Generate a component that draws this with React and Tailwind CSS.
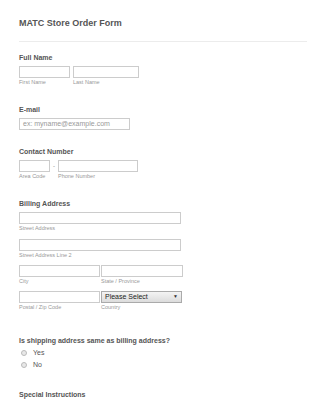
import React from 'react';

const Label = ({ children, className = '' }) => (
  <div className={`h-[10px] leading-[10px] text-[7px] font-bold text-[#555] ${className}`}>{children}</div>
);

const Sub = ({ children, className = '' }) => (
  <div className={`h-[8px] leading-[8px] text-[5.5px] text-[#999] ${className}`}>{children}</div>
);

const Input = ({ className = '', placeholder }) => (
  <div className={`h-[12px] border border-[#ccc] bg-white flex items-center pl-[3px] text-[7px] text-[#999] ${className}`}>
    {placeholder}
  </div>
);

const Radio = ({ label }) => (
  <div className="h-[12px] flex items-center">
    <span className="ml-[2px] w-[6px] h-[6px] rounded-full border border-[#bbb] bg-[#e8e8e8]" />
    <span className="ml-[6px] text-[7px] text-[#555] leading-[12px]">{label}</span>
  </div>
);

export default function App() {
  return (
    <div
      className="w-[325px] h-[400px] overflow-hidden bg-white px-[19px]"
      style={{ fontFamily: '"Liberation Sans", Arial, sans-serif' }}
    >
      {/* Header */}
      <div className="pt-[17px] h-[29px] leading-[12px] text-[9px] font-bold text-[#555]">
        MATC Store Order Form
      </div>
      <div className="mt-[12px] h-px w-[288px] bg-[#ececec]" />

      {/* Full name */}
      <Label className="mt-[11px]">Full Name</Label>
      <div className="mt-[3px] flex">
        <div>
          <Input className="w-[51px]" />
          <Sub>First Name</Sub>
        </div>
        <div className="ml-[3px]">
          <Input className="w-[66px]" />
          <Sub>Last Name</Sub>
        </div>
      </div>

      {/* Email */}
      <Label className="mt-[19px]">E-mail</Label>
      <Input className="mt-[3px] w-[111px]" placeholder="ex: myname@example.com" />

      {/* Contact */}
      <Label className="mt-[17px]">Contact Number</Label>
      <div className="mt-[3px] flex">
        <div>
          <Input className="w-[31px]" />
          <Sub>Area Code</Sub>
        </div>
        <div className="w-[8px] h-[12px] flex items-center justify-center text-[6px] text-[#777]">-</div>
        <div>
          <Input className="w-[80px]" />
          <Sub>Phone Number</Sub>
        </div>
      </div>

      {/* Billing */}
      <Label className="mt-[19px]">Billing Address</Label>
      <Input className="mt-[3px] w-[162px]" />
      <Sub>Street Address</Sub>
      <Input className="mt-[7px] w-[162px]" />
      <Sub>Street Address Line 2</Sub>
      <div className="mt-[6px] flex gap-[1px]">
        <div>
          <Input className="w-[81px]" />
          <Sub>City</Sub>
        </div>
        <div>
          <Input className="w-[82px]" />
          <Sub>State / Province</Sub>
        </div>
      </div>
      <div className="mt-[6px] flex gap-[1px]">
        <div>
          <Input className="w-[81px]" />
          <Sub>Postal / Zip Code</Sub>
        </div>
        <div>
          <div className="h-[12px] w-[81px] border border-[#aaa] bg-gradient-to-b from-[#f4f4f4] to-[#dcdcdc] flex items-center justify-between px-[3px]">
            <span className="text-[7px] text-[#222]">Please Select</span>
            <span className="text-[5px] text-[#333]">▼</span>
          </div>
          <Sub>Country</Sub>
        </div>
      </div>

      {/* Shipping question */}
      <Label className="mt-[25px]">Is shipping address same as billing address?</Label>
      <div className="mt-[1px]">
        <Radio label="Yes" />
        <Radio label="No" />
      </div>

      {/* Special instructions */}
      <Label className="mt-[19px]">Special Instructions</Label>
    </div>
  );
}
